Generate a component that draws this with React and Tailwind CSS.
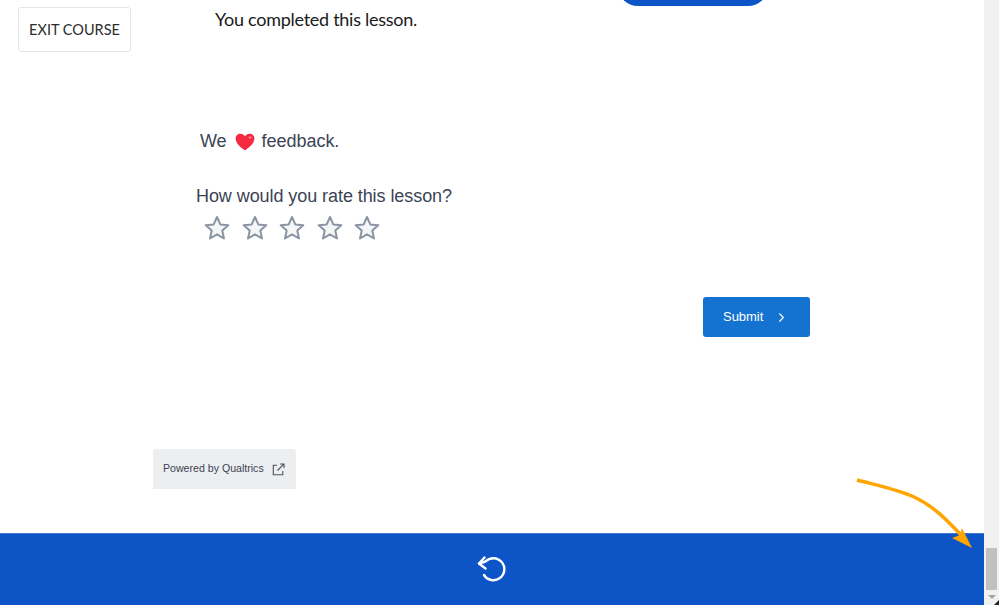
import React from "react";
import { ChevronRight } from "lucide-react";

const Star = () => (
  <svg width="26" height="25" viewBox="0 0 26 25" fill="#f5f6f7" stroke="#8a94a3" strokeWidth="2" strokeLinejoin="round">
    <path d="M13 2l3.3 7.4 8 .8-6 5.4 1.7 7.9-7-4.1-7 4.1 1.7-7.9-6-5.4 8-.8z" />
  </svg>
);

const Heart = () => (
  <svg width="20" height="18" viewBox="0 0 20 18">
    <path d="M10 17.5C6 14.5.6 10.6.6 5.6.6 2.6 2.9.7 5.4.7 7.4.7 9 1.8 10 3.4 11 1.8 12.6.7 14.6.7c2.5 0 4.8 1.9 4.8 4.9 0 5-5.4 8.9-9.4 11.9z" fill="#f5293f" />
    <ellipse cx="15" cy="4.6" rx="1.6" ry="1.1" fill="#ff8f9c" />
  </svg>
);

const App = () => {
  return (
    <div className="relative flex h-[605px] w-[999px] overflow-hidden bg-white font-['Liberation_Sans',sans-serif]">
      <div className="flex w-[984px] flex-col">
        <div className="ml-[618px] mt-[-34px] h-[40px] w-[150px] rounded-[20px] bg-[#0d55c7]"></div>
        <p className="ml-[215px] mt-[2px] font-['Lato',sans-serif] text-[18px] leading-[22px] tracking-[-0.27px] text-[#1a1a1a]">
          You completed this lesson.
        </p>

        <div className="ml-[200px] mt-[98px] flex h-[26px] items-center text-[18px] tracking-[-0.04px] text-[#3b4454]">
          <span>We</span>
          <span className="ml-[8px] mr-[7px] mt-[1px]"><Heart /></span>
          <span>feedback.</span>
        </div>
        <p className="ml-[196px] mt-[30px] text-[18px] leading-[24px] tracking-[-0.07px] text-[#3b4454]">
          How would you rate this lesson?
        </p>
        <div className="ml-[204px] mt-[7px] flex gap-[11.5px]">
          <Star />
          <Star />
          <Star />
          <Star />
          <Star />
        </div>

        <div className="ml-[703px] mt-[57px]">
          <button className="flex h-[40px] w-[107px] items-center rounded-[3px] bg-[#1472d0] pl-[20px] text-[13px] tracking-[-0.03px] text-white">
            Submit
            <ChevronRight size={15} strokeWidth={1.75} className="ml-[11px]" />
          </button>
        </div>

        <div className="ml-[153px] mt-[112px] flex h-[40px] w-[143px] items-center rounded-t-[3px] bg-[#edeef0] pl-[10px] text-[10.6px] text-[#3b4454]">
          Powered by Qualtrics
          <svg className="ml-[8px]" width="13" height="13" viewBox="0 0 13 13" fill="none" stroke="#4a5260" strokeWidth="1.1">
            <path d="M5 2.2H1.3v9.5h9.5V8" />
            <path d="M5.5 7.5L11.8 1.2M8 1h4v4" />
          </svg>
        </div>

        <div className="mt-auto flex h-[72px] items-center justify-center border-t border-[#3f78d4] bg-[#0d55c7]">
          <svg width="32" height="32" viewBox="476 554 32 32" fill="none" stroke="white" strokeWidth="2.4" strokeLinecap="round" strokeLinejoin="round">
            <path d="M484 575A11 11 0 1 0 485.5 561.5L479 563.5" />
            <path d="M484.5 557.5L479 563.5L485.5 568.5" />
          </svg>
        </div>
      </div>

      <div className="flex w-[15px] flex-col items-center bg-[#f1f1f1]">
        <div className="mt-[548px] h-[42px] w-[11px] bg-[#c1c1c1]"></div>
        <div className="mt-[5px] h-0 w-0 border-x-[4px] border-t-[4px] border-x-transparent border-t-[#a3a3a3]"></div>
      </div>

      <button className="absolute left-[18px] top-[7px] h-[45px] w-[113px] rounded-[3px] border border-[#e6e6e6] bg-white font-['Lato',sans-serif] text-[14.5px] text-[#2d2d2d]">
        EXIT COURSE
      </button>

      <svg className="absolute left-[850px] top-[472px]" width="130" height="82" viewBox="0 0 130 82" fill="none">
        <path d="M7 8C30 14 50 18 66 26c17 8 30 21 46 38" stroke="#ffa500" strokeWidth="3.5" />
        <path d="M122 76L102 66l8-3 2-7z" fill="#ffa500" />
      </svg>

      <div className="absolute bottom-0 right-0 h-0 w-0 border-b-[5px] border-l-[5px] border-b-[#222222] border-l-transparent"></div>
    </div>
  );
};

export default App;
